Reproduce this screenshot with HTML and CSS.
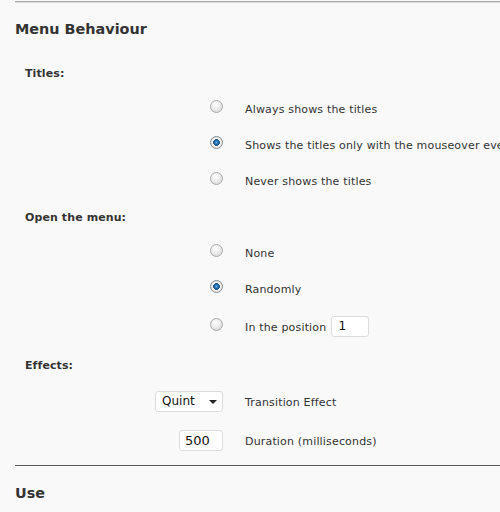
FILE: index.html
```html
<!DOCTYPE html>
<html>
<head>
<meta charset="utf-8">
<link rel="stylesheet" href="styles.css">
</head>
<body>
<div class="topline"></div>
<h2 class="title">Menu Behaviour</h2>

<div class="group">Titles:</div>
<div class="row">
  <div class="ctl"><input type="radio" name="titles" class="radio"></div>
  <label class="lbl">Always shows the titles</label>
</div>
<div class="row">
  <div class="ctl"><input type="radio" name="titles" class="radio" checked></div>
  <label class="lbl nowrap">Shows the titles only with the mouseover event</label>
</div>
<div class="row">
  <div class="ctl"><input type="radio" name="titles" class="radio"></div>
  <label class="lbl">Never shows the titles</label>
</div>

<div class="group">Open the menu:</div>
<div class="row">
  <div class="ctl"><input type="radio" name="open" class="radio"></div>
  <label class="lbl">None</label>
</div>
<div class="row">
  <div class="ctl"><input type="radio" name="open" class="radio" checked></div>
  <label class="lbl">Randomly</label>
</div>
<div class="row row-tall">
  <div class="ctl"><input type="radio" name="open" class="radio"></div>
  <label class="lbl">In the position <input type="text" class="field field-pos" value="1"></label>
</div>

<div class="group">Effects:</div>
<div class="row row-select">
  <div class="ctl">
    <div class="select"><span>Quint</span><span class="caret"></span></div>
  </div>
  <label class="lbl">Transition Effect</label>
</div>
<div class="row row-tall">
  <div class="ctl"><input type="text" class="field field-dur" value="500"></div>
  <label class="lbl">Duration (milliseconds)</label>
</div>

<hr class="sep">
<h2 class="title title-use">Use</h2>
</body>
</html>
```
FILE: styles.css
```css
html, body {
  margin: 0;
  padding: 0;
  background: #f9f9f9;
  overflow: hidden;
}
body {
  font-family: "DejaVu Sans", Verdana, sans-serif;
  font-size: 11px;
  color: #333;
  width: 500px;
  height: 512px;
}
.topline {
  margin-left: 15px;
  margin-top: 1px;
  height: 1px;
  background: #a9a9a9;
  border-bottom: 1px solid #dcdcdc;
}
.title {
  margin: 16px 0 0 15px;
  font-size: 14.4px;
  line-height: 20px;
  font-weight: bold;
  color: #333;
}
.group {
  margin-left: 25px;
  font-weight: bold;
  height: 36px;
  box-sizing: border-box;
  padding-top: 3px;
  line-height: 33px;
  letter-spacing: 0.1px;
}
.title + .group {
  margin-top: 15px;
}
.row {
  display: flex;
  align-items: center;
  height: 36px;
}
.row-tall {
  height: 40px;
}
.row-select {
  height: 38px;
}
.ctl {
  width: 223px;
  flex: none;
  display: flex;
  justify-content: flex-end;
  align-items: center;
}
.lbl {
  margin-left: 22px;
  white-space: nowrap;
  display: flex;
  align-items: center;
  padding-top: 3px;
  letter-spacing: 0.17px;
}
.radio {
  appearance: none;
  -webkit-appearance: none;
  margin: 0 0 3px 0;
  width: 13px;
  height: 13px;
  border-radius: 50%;
  border: 1px solid #a9a9a9;
  box-sizing: border-box;
  background: radial-gradient(circle at 40% 35%, #ffffff 0%, #eeeeee 40%, #cfcfcf 100%);
}
.radio:checked {
  border-color: #7f8a94;
  background: radial-gradient(circle at 50% 50%, #5aa6e0 0%, #1f66a8 28%, #17507f 40%, #f4f4f4 46%, #e4e4e4 75%, #c9c9c9 100%);
}
.field {
  font-family: "DejaVu Sans", Verdana, sans-serif;
  font-size: 12px;
  color: #111;
  background: #fff;
  border: 1px solid #dcdcdc;
  border-radius: 3px;
  box-sizing: border-box;
  height: 21px;
  padding: 0 6px;
  margin: 0;
  outline: none;
  letter-spacing: 0;
}
.field-pos {
  width: 38px;
  margin-left: 5px;
  margin-top: -3px;
}
.field-dur {
  width: 44px;
  font-size: 13px;
  padding: 0 5px;
}
.select {
  width: 68px;
  height: 21px;
  box-sizing: border-box;
  border: 1px solid #dcdcdc;
  border-radius: 3px;
  background: #fff;
  display: flex;
  align-items: center;
  justify-content: space-between;
  padding: 0 5px 0 6px;
  font-size: 12px;
  color: #111;
}
.caret {
  width: 0;
  height: 0;
  border-left: 4px solid transparent;
  border-right: 4px solid transparent;
  border-top: 4px solid #222;
  margin-top: 2px;
}
.sep {
  margin: 5px 0 0 15px;
  border: 0;
  height: 1px;
  background: #555;
  border-bottom: 1px solid #fff;
}
.title-use {
  margin-top: 16px;
}
```
